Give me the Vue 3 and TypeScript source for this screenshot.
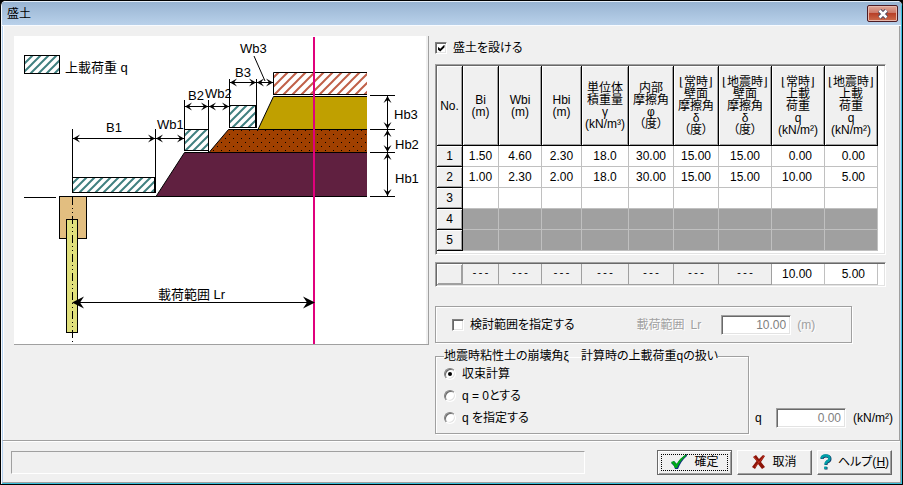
<script setup lang="ts">
import { ref } from 'vue'

interface Column {
  width: number
  lines: string[]
  align: 'center' | 'right'
}

const columns: Column[] = [
  { width: 36, lines: ['Bi', '(m)'], align: 'center' },
  { width: 43, lines: ['Wbi', '(m)'], align: 'center' },
  { width: 40, lines: ['Hbi', '(m)'], align: 'center' },
  { width: 47, lines: ['単位体', '積重量', 'γ', '(kN/m³)'], align: 'center' },
  { width: 45, lines: ['内部', '摩擦角', 'φ', '（度）'], align: 'center' },
  { width: 45, lines: ['⌊常時⌋', '壁面', '摩擦角', 'δ', '（度）'], align: 'center' },
  { width: 53, lines: ['⌊地震時⌋', '壁面', '摩擦角', 'δ', '（度）'], align: 'center' },
  { width: 53, lines: ['⌊常時⌋', '上載', '荷重', 'q', '(kN/m²)'], align: 'right' },
  { width: 53, lines: ['⌊地震時⌋', '上載', '荷重', 'q', '(kN/m²)'], align: 'right' },
]

const rows: { values: string[]; disabled: boolean }[] = [
  { values: ['1.50', '4.60', '2.30', '18.0', '30.00', '15.00', '15.00', '0.00', '0.00'], disabled: false },
  { values: ['1.00', '2.30', '2.00', '18.0', '30.00', '15.00', '15.00', '10.00', '5.00'], disabled: false },
  { values: Array(9).fill(''), disabled: false },
  { values: Array(9).fill(''), disabled: true },
  { values: Array(9).fill(''), disabled: true },
]

const summary = ['---', '---', '---', '---', '---', '---', '---', '10.00', '5.00']

const enabled = ref(true)
const limitRange = ref(false)
const mode = ref('converge')
const range = ref('10.00')
const load = ref('0.00')

const modes = [
  { id: 'converge', text: '収束計算' },
  { id: 'zero', text: 'q = 0とする' },
  { id: 'custom', text: 'q を指定する' },
]

// Horizontal and vertical dimension lines of the cross-section.
const dims = [
  { x1: 73, x2: 155, y: 138.5 },
  { x1: 156, x2: 184, y: 138.5 },
  { x1: 185, x2: 208, y: 106.5 },
  { x1: 209, x2: 229, y: 106.5 },
  { x1: 230, x2: 256, y: 82.5 },
  { x1: 257, x2: 273, y: 82.5 },
]
const heights = [
  { y1: 96, y2: 129 },
  { y1: 130, y2: 152 },
  { y1: 153, y2: 196 },
]
const labels = [
  { x: 106, y: 132, t: 'B1' },
  { x: 157, y: 129, t: 'Wb1' },
  { x: 188, y: 100, t: 'B2' },
  { x: 205, y: 98, t: 'Wb2' },
  { x: 235, y: 77, t: 'B3' },
  { x: 240, y: 53, t: 'Wb3' },
  { x: 394, y: 119, t: 'Hb3' },
  { x: 395, y: 149, t: 'Hb2' },
  { x: 395, y: 183, t: 'Hb1' },
]

// Arrow heads with the tip at the origin, pointing left.
const head = 'M0 0L7 -4L4 0L7 4Z'
const bigHead = 'M0 0L12 -6L8 0L12 6Z'
</script>

<template>
  <div class="window">
    <div class="frame">
      <header class="titlebar">
        <h1>盛土</h1>
        <button class="close" type="button" aria-label="閉じる">
          <svg width="12" height="10" viewBox="0 0 12 10">
            <path d="M2.500 1.500L9.500 8.500M9.500 1.500L2.500 8.500" stroke="#4a4a60" stroke-width="4.500" />
            <path d="M2.500 1.500L9.500 8.500M9.500 1.500L2.500 8.500" stroke="#fff" stroke-width="2.500" />
          </svg>
        </button>
      </header>

      <main class="content">
        <div class="diagram">
          <svg viewBox="14 36 412 308">
            <defs>
              <pattern id="teal" width="8" height="8" patternUnits="userSpaceOnUse">
                <path d="M-2 2L2 -2M-1 9L9 -1M6 10L10 6" stroke="#408080" stroke-width="2" />
              </pattern>
              <pattern id="red" width="9" height="9" patternUnits="userSpaceOnUse">
                <path d="M-2 2L2 -2M-1 10L10 -1M7 11L11 7" stroke="#c06048" stroke-width="2" />
              </pattern>
              <pattern id="dots" width="8" height="8" patternUnits="userSpaceOnUse">
                <path d="M1 2h1v1h-1zM5 6h1v1h-1z" fill="#000" />
              </pattern>
            </defs>

            <g stroke="#000">
              <rect x="24.500" y="55.500" width="35" height="18" fill="url(#teal)" />
              <rect x="72.500" y="177.500" width="82" height="15" fill="url(#teal)" />
              <rect x="184.500" y="129.500" width="24" height="21" fill="url(#teal)" />
              <rect x="229.500" y="105.500" width="26" height="22" fill="url(#teal)" />
            </g>
            <rect x="274" y="73" width="93" height="21" fill="url(#red)" />
            <path d="M367 72.500H273.500V94.500H367" fill="none" stroke="#000" />

            <path d="M258 129.500L273.500 96.500H367V129.500Z" fill="#c0a000" />
            <path d="M209 152.500L228.500 129.500H367V152.500Z" fill="#a04000" />
            <path d="M211 152L229 130H367V152Z" fill="url(#dots)" />
            <path d="M156 196.500L184.500 152.500H367V196.500Z" fill="#602040" />
            <path
              d="M258 129.500L273.500 96.500H367M209 152.500L228.500 129.500H367M156 196.500L184.500 152.500H367M60 196.500H367M24 197.500H56"
              fill="none"
              stroke="#000"
            />

            <g stroke="#000">
              <rect x="59.500" y="196.500" width="27" height="42" fill="#e2be80" />
              <rect x="66.500" y="219.500" width="11" height="113" fill="#e0e07c" />
              <path d="M72.500 197V343" stroke-dasharray="8 3 1 3 1 3" />
              <path
                fill="none"
                d="M72.500 129V193M155.500 129V193M184.500 100V151M208.500 100V152M229.500 79V128M256.500 79V128M273.500 79V95M254 56L265 81M370 95.500H395M370 129.500H395M370 152.500H395M370 196.500H395M73 302.500H313"
              />
            </g>

            <g v-for="d in dims" :key="d.x1">
              <path :d="`M${d.x1} ${d.y}H${d.x2}`" stroke="#000" />
              <path :d="head" :transform="`translate(${d.x1} ${d.y})`" />
              <path :d="head" :transform="`translate(${d.x2} ${d.y}) rotate(180)`" />
            </g>
            <g v-for="h in heights" :key="h.y1">
              <path :d="`M387.500 ${h.y1}V${h.y2}`" stroke="#000" />
              <path :d="head" :transform="`translate(387.500 ${h.y1}) rotate(90)`" />
              <path :d="head" :transform="`translate(387.500 ${h.y2}) rotate(270)`" />
            </g>
            <path d="M314 37V344" stroke="#e0007c" stroke-width="2" />
            <path :d="bigHead" transform="translate(72 302.500)" />
            <path :d="bigHead" transform="translate(315 302.500) rotate(180)" />

            <text v-for="l in labels" :key="l.t" :x="l.x" :y="l.y">{{ l.t }}</text>
            <text x="65" y="72">上載荷重 q</text>
            <text x="158" y="299">載荷範囲 Lr</text>
          </svg>
        </div>

        <section class="settings">
          <label class="check enable"><input v-model="enabled" type="checkbox" />盛土を設ける</label>

          <div class="sunken grid-box">
            <table class="grid">
              <colgroup>
                <col :style="{ width: '26px' }" />
                <col v-for="(c, i) in columns" :key="i" :style="{ width: c.width + 'px' }" />
              </colgroup>
              <thead>
                <tr>
                  <th scope="col">No.</th>
                  <th v-for="(c, i) in columns" :key="i" scope="col">
                    <span v-for="(line, n) in c.lines" :key="n" class="line">{{ line }}</span>
                  </th>
                </tr>
              </thead>
              <tbody>
                <tr v-for="(r, i) in rows" :key="i" :class="{ off: r.disabled }">
                  <th scope="row">{{ i + 1 }}</th>
                  <td v-for="(v, n) in r.values" :key="n" :class="columns[n].align">{{ v }}</td>
                </tr>
              </tbody>
            </table>
          </div>

          <div class="sunken total-box">
            <table class="grid total">
              <colgroup>
                <col :style="{ width: '26px' }" />
                <col v-for="(c, i) in columns" :key="i" :style="{ width: c.width + 'px' }" />
              </colgroup>
              <tbody>
                <tr>
                  <th></th>
                  <td v-for="(v, n) in summary" :key="n" :class="[columns[n].align, { blank: v === '---' }]">{{ v }}</td>
                </tr>
              </tbody>
            </table>
          </div>

          <div class="etched range">
            <label class="check"><input v-model="limitRange" type="checkbox" />検討範囲を指定する</label>
            <label class="dim range-label" for="range">載荷範囲&ensp;Lr</label>
            <input id="range" v-model="range" class="field" type="text" disabled />
            <span class="dim">(m)</span>
          </div>

          <div class="bottom">
            <fieldset class="etched modes">
              <legend>地震時粘性土の崩壊角ξ　計算時の上載荷重qの扱い</legend>
              <label v-for="m in modes" :key="m.id" class="check">
                <input v-model="mode" type="radio" name="mode" :value="m.id" />{{ m.text }}
              </label>
            </fieldset>
            <div class="load">
              <label for="load">q</label>
              <input id="load" v-model="load" class="field" type="text" disabled />
              <span class="unit">(kN/m²)</span>
            </div>
          </div>
        </section>
      </main>

      <footer class="footer">
        <div class="status"></div>
        <button class="btn default" type="button">
          <svg width="18" height="16" viewBox="0 0 18 16">
            <path d="M1 9L4 7L7 10Q10 4 17 0L17 2Q11 7 8 15L5 15Q4 11 1 9Z" fill="#103080" />
            <path d="M1 8L4 7L6.500 10Q10 4 16.500 0L16 2Q10 7 7 14L5 14Q3 10 1 8Z" fill="#00a818" />
          </svg>
          確定
        </button>
        <button class="btn" type="button">
          <svg width="14" height="14" viewBox="0 0 14 14">
            <path d="M1 2L4 0L7 4L11 0L13 1L9 7L13 12L10 14L6 9L3 14L0 12L4.500 6Z" fill="#8c1408" />
            <path d="M2 2L7 7.500L12 1M7 7L3 12" fill="none" stroke="#c03020" />
          </svg>
          取消
        </button>
        <button class="btn" type="button">
          <svg width="12" height="16" viewBox="0 0 12 16">
            <path d="M2 5Q2 2 6 2Q10 2 10 5Q10 7 7 8Q6 9 6 11M6 13V15.500" fill="none" stroke="#103060" stroke-width="3" />
            <path d="M1.500 4.500Q2 1.500 5.500 1.500Q9.500 1.500 9.500 4.500Q9.500 6.500 7 7.500Q5.500 8.500 5.500 10.500M5.500 12.500V15" fill="none" stroke="#00a0a8" stroke-width="2.500" />
          </svg>
          <span>ヘルプ(<u>H</u>)</span>
        </button>
      </footer>
    </div>
  </div>
</template>

<style>
body {
  background: #000;
}
</style>

<style scoped>
* {
  box-sizing: border-box;
}

.window {
  min-height: 100vh;
  display: flex;
  padding-left: 1px;
  border: 1px solid #000;
  border-radius: 6px 6px 0 0;
  overflow: hidden;
  background: #f4f8fc;
  color: #000;
  font: 12px/12px 'Liberation Sans', 'Noto Sans CJK JP', sans-serif;
  font-feature-settings: 'palt';
}

.frame {
  flex: 1;
  min-width: 0;
  display: flex;
  flex-direction: column;
  border: solid #38c0dc;
  border-width: 0 1px 1px 0;
  background: #f0f0f0;
}

.titlebar {
  display: flex;
  align-items: center;
  justify-content: space-between;
  height: 25px;
  padding: 0 3px 0 5px;
  border-top: 1px solid #e4eef8;
  border-bottom: 1px solid #f8fbff;
  background: linear-gradient(#98b4d2, #b9d1ea);
}

h1 {
  margin: 0;
  font-size: 12px;
  font-weight: 400;
}

.close {
  display: flex;
  align-items: center;
  justify-content: center;
  width: 31px;
  height: 17px;
  padding: 0;
  border: 1px solid #4c1c24;
  border-radius: 2px;
  background: linear-gradient(#e0a898, #cc7868 45%, #b84028 50%, #cc6c4c);
  box-shadow: inset 0 0 0 1px #e8b8ac;
}

.content {
  flex: 1;
  display: grid;
  grid-template-columns: minmax(0, 415fr) minmax(0, 451fr);
  gap: 6px;
  align-items: start;
  padding: 10px 14px 6px 11px;
  border: solid #b4d0ee;
  border-width: 0 1px;
  box-shadow: inset -1px 0 #a0a0a0, inset 1px 0 #fff;
}

.diagram {
  padding-right: 2px;
  border: solid #a0a0a0;
  border-width: 0 1px 1px 0;
}

.diagram svg {
  display: block;
  width: 100%;
  background: #fff;
}

.diagram text {
  font-size: 13px;
}

.settings {
  display: flex;
  flex-direction: column;
}

.check {
  display: flex;
  align-items: center;
  gap: 6px;
  white-space: nowrap;
}

.enable {
  height: 24px;
  margin-bottom: 4px;
}

.check input {
  appearance: none;
  width: 12px;
  height: 12px;
  margin: 0;
  border: 1px solid;
  border-color: #808080 #fff #fff #808080;
  background: #fff;
  box-shadow: inset 1px 1px #696969, inset -1px -1px #e3e3e3;
}

.check input[type='checkbox']:checked {
  display: grid;
  place-items: center;
}

.check input[type='checkbox']:checked::before {
  content: '';
  width: 7px;
  height: 7px;
  background: #000;
  clip-path: polygon(0 30%, 40% 60%, 100% 0, 100% 40%, 40% 100%, 0 70%);
}

.check input[type='radio'] {
  display: grid;
  place-items: center;
  border-radius: 50%;
}

.check input[type='radio']:checked::before {
  content: '';
  width: 4px;
  height: 4px;
  border-radius: 50%;
  background: #000;
}

.sunken {
  border: 1px solid;
  border-color: #a0a0a0 #fff #fff #a0a0a0;
  box-shadow: inset 1px 1px #696969, inset -1px -1px #e3e3e3;
  background: #fff;
}

.grid-box {
  padding: 1px 7px 3px 1px;
}

.total-box {
  margin-top: 7px;
  padding: 1px 7px 1px 1px;
}

.grid {
  width: 100%;
  table-layout: fixed;
  border-collapse: separate;
  border-spacing: 0;
}

.grid th,
.grid td {
  height: 21px;
  padding: 0;
  overflow: hidden;
  white-space: nowrap;
  font-weight: 400;
  text-align: center;
}

.grid th {
  border: solid #000;
  border-width: 0 1px 1px 0;
  background: #f0f0f0;
  box-shadow: inset 1px 1px #fff, inset -1px -1px #a0a0a0;
}

.grid thead th {
  height: 80px;
}

.line {
  display: block;
}

.grid td {
  border: solid #c0c0c0;
  border-width: 0 1px 1px 0;
}

.grid td.right {
  padding-right: 12px;
  text-align: right;
}

.grid .off td {
  background: #a0a0a0;
}

.total th {
  border-color: #a0a0a0;
}

.total td.blank {
  border-color: #a0a0a0;
  background: #f0f0f0;
  font-family: 'Liberation Mono', monospace;
  font-size: 10px;
}

.etched {
  border: 1px solid #a0a0a0;
  box-shadow: 1px 1px #fff, inset 1px 1px #fff;
}

.range {
  display: flex;
  align-items: center;
  width: 92.5%;
  height: 37px;
  margin-top: 19px;
  padding-left: 16px;
}

.range-label {
  margin-left: auto;
  padding-right: 20px;
}

.dim {
  color: #a0a0a0;
  text-shadow: 1px 1px #fff;
  white-space: nowrap;
}

.range > span {
  width: 60px;
  padding-left: 6px;
}

.field {
  width: 70px;
  height: 20px;
  flex: none;
  padding: 1px 4px 1px 2px;
  border: 1px solid;
  border-color: #a0a0a0 #fff #fff #a0a0a0;
  box-shadow: inset 1px 1px #696969, inset -1px -1px #e3e3e3;
  background: #fff;
  color: #808080;
  font: inherit;
  text-align: right;
}

.bottom {
  display: flex;
  align-items: flex-end;
  gap: 6px;
  margin-top: 7px;
}

.modes {
  flex: 1;
  min-width: 0;
  height: 84px;
  margin: 0;
  padding: 1px 8px 0;
}

.modes legend {
  padding: 0;
  white-space: nowrap;
}

.modes .check {
  height: 22px;
}

.load {
  display: flex;
  align-items: center;
  gap: 7px;
  padding-bottom: 6px;
  margin-right: -7px;
}

.load label {
  width: 14px;
}

.footer {
  display: flex;
  align-items: center;
  gap: 5px;
  height: 43px;
  padding: 1px 8px 0 8px;
  border: 1px solid #a0a0a0;
  border-left-color: #b4d0ee;
  box-shadow: inset 0 1px #fff;
}

.status {
  flex: 1;
  height: 23px;
  margin-right: 67px;
  border: 1px solid;
  border-color: #a0a0a0 #fff #fff #a0a0a0;
}

.btn {
  display: flex;
  align-items: center;
  justify-content: center;
  gap: 6px;
  width: 75px;
  height: 25px;
  padding: 0;
  border: 1px solid;
  border-color: #fff #696969 #696969 #fff;
  background: #f0f0f0;
  box-shadow: inset -1px -1px #a0a0a0;
  color: #000;
  font: inherit;
  white-space: nowrap;
}

.btn.default {
  border-color: #696969;
  box-shadow: inset 1px 1px #fff, inset -1px -1px #a0a0a0;
  outline: 1px dotted #000;
  outline-offset: -5px;
}
</style>
